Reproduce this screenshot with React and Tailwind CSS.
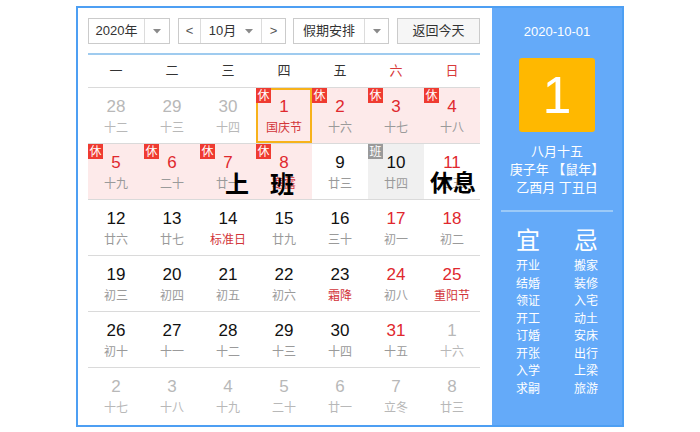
import React from "react";

const FONT = { fontFamily: '"Liberation Sans", "Noto Sans CJK SC", sans-serif' };

// d: day, l: lunar, t: type (o = other month, w = weekend/holiday red, n = normal), lr: lunar red, b: badge
const rows = [
  [
    { d: 28, l: "十二", t: "o" },
    { d: 29, l: "十三", t: "o" },
    { d: 30, l: "十四", t: "o" },
    { d: 1, l: "国庆节", t: "w", lr: true, b: "休", sel: true },
    { d: 2, l: "十六", t: "w", b: "休" },
    { d: 3, l: "十七", t: "w", b: "休" },
    { d: 4, l: "十八", t: "w", b: "休" },
  ],
  [
    { d: 5, l: "十九", t: "w", b: "休" },
    { d: 6, l: "二十", t: "w", b: "休" },
    { d: 7, l: "廿一", t: "w", b: "休" },
    { d: 8, l: "寒露", t: "w", lr: true, b: "休" },
    { d: 9, l: "廿三", t: "n" },
    { d: 10, l: "廿四", t: "n", b: "班" },
    { d: 11, l: "廿五", t: "w" },
  ],
  [
    { d: 12, l: "廿六", t: "n" },
    { d: 13, l: "廿七", t: "n" },
    { d: 14, l: "标准日", t: "n", lr: true },
    { d: 15, l: "廿九", t: "n" },
    { d: 16, l: "三十", t: "n" },
    { d: 17, l: "初一", t: "w" },
    { d: 18, l: "初二", t: "w" },
  ],
  [
    { d: 19, l: "初三", t: "n" },
    { d: 20, l: "初四", t: "n" },
    { d: 21, l: "初五", t: "n" },
    { d: 22, l: "初六", t: "n" },
    { d: 23, l: "霜降", t: "n", lr: true },
    { d: 24, l: "初八", t: "w" },
    { d: 25, l: "重阳节", t: "w", lr: true },
  ],
  [
    { d: 26, l: "初十", t: "n" },
    { d: 27, l: "十一", t: "n" },
    { d: 28, l: "十二", t: "n" },
    { d: 29, l: "十三", t: "n" },
    { d: 30, l: "十四", t: "n" },
    { d: 31, l: "十五", t: "w" },
    { d: 1, l: "十六", t: "o" },
  ],
  [
    { d: 2, l: "十七", t: "o" },
    { d: 3, l: "十八", t: "o" },
    { d: 4, l: "十九", t: "o" },
    { d: 5, l: "二十", t: "o" },
    { d: 6, l: "廿一", t: "o" },
    { d: 7, l: "立冬", t: "o" },
    { d: 8, l: "廿三", t: "o" },
  ],
];

const yi = ["开业", "结婚", "领证", "开工", "订婚", "开张", "入学", "求嗣"];
const ji = ["搬家", "装修", "入宅", "动土", "安床", "出行", "上梁", "旅游"];

const Caret = () => (
  <svg width="8" height="5" viewBox="0 0 8 5">
    <path d="M0 0 L8 0 L4 4.5 Z" fill="#8a8a8a" />
  </svg>
);

const Cell = ({ c }) => {
  const holiday = c.b === "休";
  const work = c.b === "班";
  let bg = "";
  if (holiday) bg = "bg-[#fdeaea]";
  if (work) bg = "bg-[#f0f0f0]";
  const numColor =
    c.t === "o" ? "text-[#b8b8b8]" : c.t === "w" ? "text-[#e0282e]" : "text-[#111]";
  const lunarColor = c.t === "o" ? "text-[#b8b8b8]" : c.lr ? "text-[#d2353a]" : "text-[#9a9a9a]";
  return (
    <div className={`relative h-full flex flex-col items-center pt-[9px] ${bg}`}>
      {c.sel && <div className="absolute inset-0 border-2 border-[#f7b21b]" />}
      {c.b && (
        <span
          className={`absolute left-0 top-0 w-[15px] h-[15px] flex items-center justify-center text-[12px] leading-none text-white ${
            holiday ? "bg-[#ef3b31]" : "bg-[#9a9a9a]"
          }`}
        >
          {c.b}
        </span>
      )}
      <span className={`text-[17px] leading-[20px] ${numColor}`}>{c.d}</span>
      <span className={`mt-[3px] text-[12px] leading-[16px] ${lunarColor}`}>{c.l}</span>
    </div>
  );
};

export default function App() {
  return (
    <div className="w-[700px] h-[432px] bg-white pt-[6px] pl-[76px]" style={FONT}>
      <div className="w-[548px] h-[421px] border-2 border-[#4d9ff3] flex">
        {/* left calendar */}
        <div className="w-[414px] pl-[10px] pr-[12px] pt-[10px] relative">
          <div className="flex h-[26px] gap-[8px] text-[13px] text-[#333]">
            <div className="w-[82px] flex border border-[#cbcbcb]">
              <div className="flex-1 flex items-center justify-center">2020年</div>
              <div className="w-[25px] border-l border-[#dcdcdc] flex items-center justify-center">
                <Caret />
              </div>
            </div>
            <div className="w-[108px] flex border border-[#cbcbcb]">
              <div className="w-[22px] border-r border-[#dcdcdc] flex items-center justify-center text-[#555]">
                &lt;
              </div>
              <div className="flex-1 flex items-center justify-center gap-[9px]">
                <span>10月</span>
                <Caret />
              </div>
              <div className="w-[24px] border-l border-[#dcdcdc] flex items-center justify-center text-[#555]">
                &gt;
              </div>
            </div>
            <div className="w-[96px] flex border border-[#cbcbcb] -ml-[1px]">
              <div className="flex-1 flex items-center justify-center">假期安排</div>
              <div className="w-[24px] border-l border-[#dcdcdc] flex items-center justify-center">
                <Caret />
              </div>
            </div>
            <div className="w-[83px] border border-[#cbcbcb] bg-[#f6f6f6] flex items-center justify-center">
              返回今天
            </div>
          </div>

          <div className="mt-[9px] h-[2px] bg-[#9fcbef]" />

          <div className="grid grid-cols-7 h-[32px] items-center text-[13px] text-[#333]">
            {["一", "二", "三", "四", "五", "六", "日"].map((w, i) => (
              <div key={w} className={`text-center ${i >= 5 ? "text-[#d83a3a]" : ""}`}>
                {w}
              </div>
            ))}
          </div>

          <div>
            {rows.map((r, ri) => (
              <div key={ri} className="grid grid-cols-7 h-[56px] border-t border-[#dadada]">
                {r.map((c, ci) => (
                  <Cell key={ci} c={c} />
                ))}
              </div>
            ))}
          </div>

          {/* annotation overlay */}
          <span className="absolute left-[147px] top-[165px] text-[24px] font-bold leading-none text-black">上</span>
          <span className="absolute left-[192px] top-[165px] text-[24px] font-bold leading-none text-black">班</span>
          <span className="absolute left-[352px] top-[164px] text-[23px] font-bold leading-none text-black">休息</span>
        </div>

        {/* right panel */}
        <div className="flex-1 bg-[#64aaf9] flex flex-col items-center text-white pt-[16px]">
          <div className="text-[13px] leading-[16px]">2020-10-01</div>
          <div className="mt-[18px] w-[76px] h-[74px] rounded-[3px] bg-[#ffb800] flex items-center justify-center text-[52px] leading-none">
            1
          </div>
          <div className="mt-[11px] text-[13px] leading-[18px] text-center">
            <div>八月十五</div>
            <div>庚子年 【鼠年】</div>
            <div>乙酉月 丁丑日</div>
          </div>
          <div className="mt-[13px] w-[112px] h-[2px] bg-[#9ccaf8]" />
          <div className="mt-[15px] flex gap-[18px]">
            <div className="w-[40px] flex flex-col items-center">
              <div className="text-[24px] leading-[28px]">宜</div>
              <div className="mt-[3px] text-[12px] leading-[17.5px] text-center">
                {yi.map((t) => (
                  <div key={t}>{t}</div>
                ))}
              </div>
            </div>
            <div className="w-[40px] flex flex-col items-center">
              <div className="text-[24px] leading-[28px]">忌</div>
              <div className="mt-[3px] text-[12px] leading-[17.5px] text-center">
                {ji.map((t) => (
                  <div key={t}>{t}</div>
                ))}
              </div>
            </div>
          </div>
        </div>
      </div>
    </div>
  );
}
